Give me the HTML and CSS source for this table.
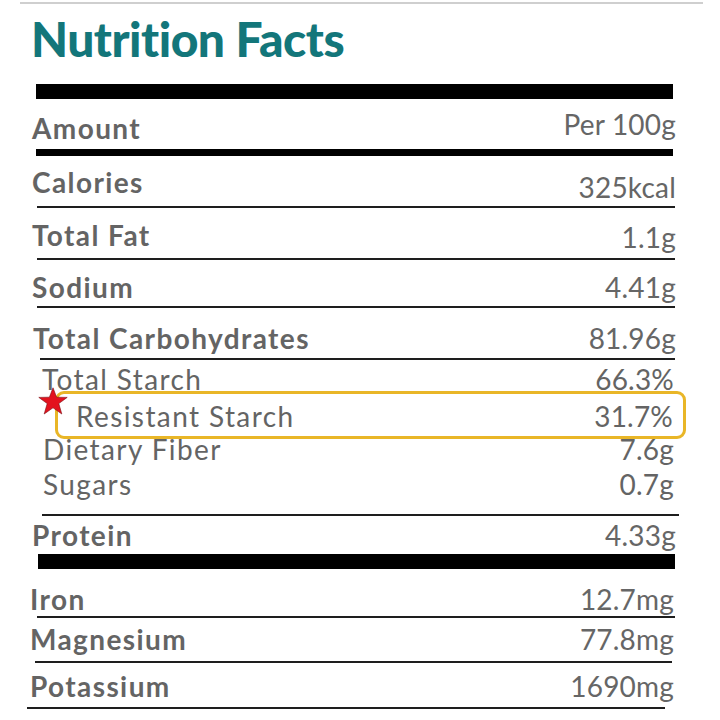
FILE: index.html
```html
<!DOCTYPE html>
<html lang="en">
<head>
<meta charset="utf-8">
<title>Nutrition Facts</title>
<link rel="stylesheet" href="styles.css">
</head>
<body>
<div class="page">
  <div class="toprule"></div>
  <h1 class="title">Nutrition Facts</h1>
  <div class="panel">
    <div class="bar bar-thick"></div>
    <div class="row row-amount">
      <span class="lbl">Amount</span>
      <span class="val">Per 100g</span>
    </div>
    <div class="bar bar-mid"></div>
    <div class="row row-cal">
      <span class="lbl">Calories</span>
      <span class="val">325kcal</span>
    </div>
    <div class="rule"></div>
    <div class="row row-fat">
      <span class="lbl">Total Fat</span>
      <span class="val">1.1g</span>
    </div>
    <div class="rule"></div>
    <div class="row row-sodium">
      <span class="lbl">Sodium</span>
      <span class="val">4.41g</span>
    </div>
    <div class="rule"></div>
    <div class="row row-carb">
      <span class="lbl">Total Carbohydrates</span>
      <span class="val">81.96g</span>
    </div>
    <div class="rule rule-carb"></div>
    <div class="sub">
      <div class="subrow sub-starch">
        <span class="slbl">Total Starch</span>
        <span class="sval">66.3%</span>
      </div>
      <div class="highlight">
        <svg class="star" viewBox="0 0 30 28" width="30" height="28" aria-hidden="true">
          <polygon points="15,0.8 18.6,10.2 29.2,10.4 20.8,16.6 23.8,27 15,20.8 6.2,27 9.2,16.6 0.8,10.4 11.4,10.2" fill="#e3121e" stroke="#7a0b12" stroke-width="0.6" stroke-linejoin="miter"/>
        </svg>
        <span class="slbl">Resistant Starch</span>
        <span class="sval">31.7%</span>
      </div>
      <div class="subrow sub-fiber">
        <span class="slbl">Dietary Fiber</span>
        <span class="sval">7.6g</span>
      </div>
      <div class="subrow sub-sugar">
        <span class="slbl">Sugars</span>
        <span class="sval">0.7g</span>
      </div>
    </div>
    <div class="rule rule-sub"></div>
    <div class="row row-protein">
      <span class="lbl">Protein</span>
      <span class="val">4.33g</span>
    </div>
    <div class="bar bar-thick bar-low"></div>
    <div class="row row-iron">
      <span class="lbl lbl-min">Iron</span>
      <span class="val">12.7mg</span>
    </div>
    <div class="rule"></div>
    <div class="row row-mag">
      <span class="lbl lbl-min">Magnesium</span>
      <span class="val">77.8mg</span>
    </div>
    <div class="rule rule-mag"></div>
    <div class="row row-pot">
      <span class="lbl lbl-min">Potassium</span>
      <span class="val">1690mg</span>
    </div>
    <div class="rule rule-pot"></div>
  </div>
</div>
</body>
</html>
```

FILE: styles.css
```css
html, body {
  margin: 0;
  padding: 0;
  background: #ffffff;
}

body {
  font-family: Lato, "Open Sans", "Liberation Sans", sans-serif;
  color: #636363;
}

.page {
  width: 720px;
  height: 720px;
  padding-top: 2px;
  box-sizing: border-box;
  overflow: hidden;
}

.toprule {
  height: 2px;
  background: #cfcfcf;
  margin: 0 17px 0 20px;
}

.title {
  margin: 11px 0 0 0;
  padding-left: 31px;
  height: 48px;
  font-size: 48px;
  line-height: 48px;
  font-weight: 900;
  color: #13767a;
  letter-spacing: -0.5px;
}

.panel {
  margin: 21px 0 0 32px;
  width: 644px;
  display: flex;
  flex-direction: column;
}

.bar {
  background: #000;
  margin: 0 3px 0 4px;
}

.bar-thick { height: 15px; }
.bar-mid { height: 7px; }

.rule {
  height: 2px;
  background: #1e1e1e;
  margin: 0 1px 0 5px;
}

.rule-carb { margin-left: 8px; }
.rule-sub { margin-left: 10px; margin-right: -3px; }
.rule-mag { margin-left: 3px; margin-right: 4px; }
.rule-pot { margin-left: -5px; margin-right: 11px; }

.row {
  display: flex;
  justify-content: space-between;
  align-items: flex-start;
  box-sizing: border-box;
}

.lbl, .val {
  font-size: 28px;
  line-height: 28px;
  white-space: nowrap;
}

.lbl {
  font-weight: 700;
  color: #646464;
  letter-spacing: 1.4px;
}

.lbl-min { margin-left: -2px; }

.val {
  font-weight: 400;
  color: #666666;
  letter-spacing: 0.2px;
}

.row-amount { height: 50px; }
.row-amount .lbl { padding-top: 15px; }
.row-amount .val { padding-top: 11px; }

.row-cal { height: 50px; }
.row-cal .lbl { padding-top: 12px; }
.row-cal .val { padding-top: 17px; }

.row-fat { height: 50px; }
.row-fat .lbl { padding-top: 13px; }
.row-fat .val { padding-top: 15px; }

.row-sodium { height: 46px; }
.row-sodium .lbl { padding-top: 13px; }
.row-sodium .val { padding-top: 13px; }

.row-carb { height: 50px; }
.row-carb .lbl { padding-top: 16px; margin-left: 1px; }
.row-carb .val { padding-top: 16px; }

.sub {
  display: flex;
  flex-direction: column;
}

.subrow {
  display: flex;
  justify-content: space-between;
  align-items: flex-start;
  padding-left: 10px;
  box-sizing: border-box;
}

.slbl, .sval {
  font-size: 28px;
  line-height: 20px;
  font-weight: 400;
  color: #646464;
  white-space: nowrap;
}

.slbl { letter-spacing: 1.4px; }

.sval { padding-right: 2px; letter-spacing: 0.2px; }

.sub-starch { height: 31px; padding-top: 9px; }
.sub-fiber { height: 35px; }
.sub-fiber .slbl { margin-left: 1px; }
.sub-sugar { height: 40px; }
.sub-sugar .slbl { margin-left: 1px; }

.highlight {
  position: relative;
  height: 48px;
  margin: 0 -10px 0 23px;
  border: 3px solid #e9b627;
  border-radius: 9px;
  box-sizing: border-box;
  display: flex;
  justify-content: space-between;
  align-items: flex-start;
  padding: 12px 8px 0 18px;
}

.star {
  position: absolute;
  left: -20px;
  top: -7px;
}

.row-protein { height: 38px; }
.row-protein .lbl { padding-top: 5px; }
.row-protein .val { padding-top: 5px; }

.bar-low { margin-left: 6px; margin-right: 1px; }

.row-iron { height: 47px; }
.row-iron .lbl { padding-top: 16px; }
.row-iron .val { padding-top: 16px; padding-right: 2px; }

.row-mag { height: 43px; }
.row-mag .lbl { padding-top: 7px; }
.row-mag .val { padding-top: 7px; padding-right: 2px; }

.row-pot { height: 44px; }
.row-pot .lbl { padding-top: 9px; }
.row-pot .val { padding-top: 9px; padding-right: 2px; }
```
